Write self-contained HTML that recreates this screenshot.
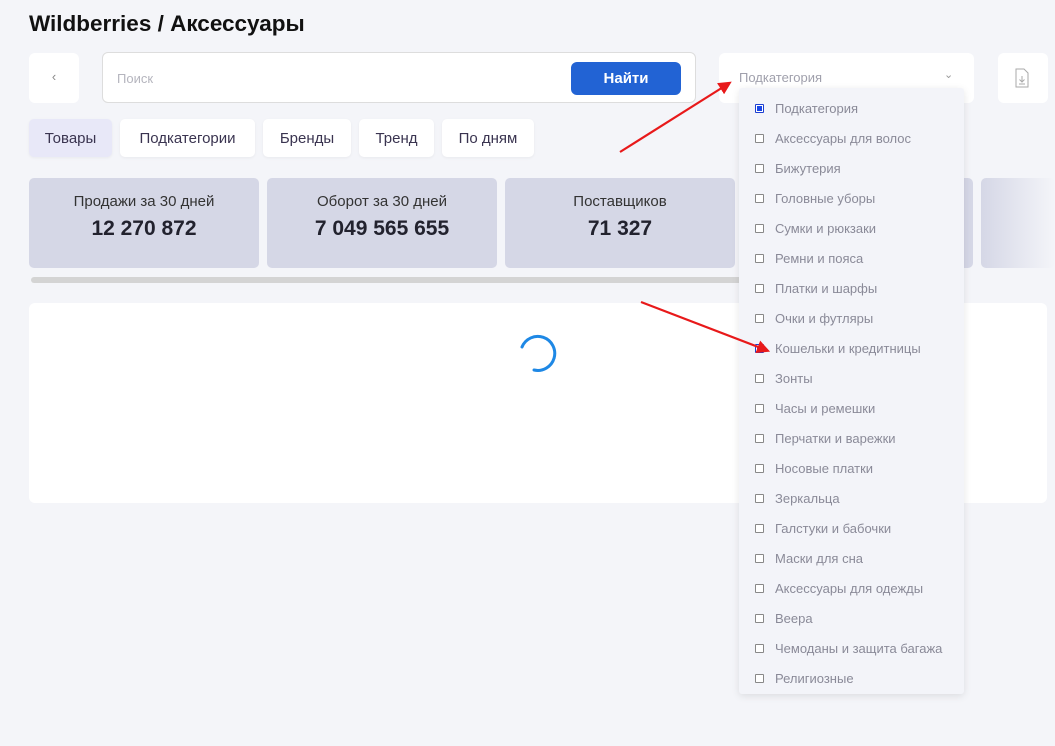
<!DOCTYPE html>
<html><head><meta charset="utf-8"><style>
*{box-sizing:border-box;margin:0;padding:0}
body{width:1055px;height:746px;background:#f4f5f9;font-family:"Liberation Sans",sans-serif;position:relative;overflow:hidden;color:#2a2a3a}
.a{position:absolute}
.w{background:#fff;border-radius:6px}
h1{position:absolute;left:29px;top:11px;font-size:22.5px;font-weight:bold;color:#111}
.tab{position:absolute;top:119px;height:38px;border-radius:5px;background:#fff;font-size:15px;line-height:39px;text-align:center;color:#3a3450;box-shadow:0 1px 3px rgba(0,0,0,.05)}
.card{position:absolute;top:178px;width:230px;height:90px;background:#d5d7e6;border-radius:5px;text-align:center}
.card .t{margin-top:15px;font-size:15px;color:#333}
.card .v{margin-top:7px;font-size:21px;font-weight:bold;color:#22222e}
.dd{position:absolute;left:739px;top:88px;width:225px;height:606px;background:#f3f4f9;box-shadow:0 2px 8px rgba(0,0,0,.1);border-radius:3px}
.it{position:absolute;left:36px;font-size:13px;color:#8a8a98;white-space:nowrap}
.cb{position:absolute;left:16px;width:9px;height:9px;border:1px solid #888;border-radius:1px;background:#fff}
.cb.on{border-color:#1d3fd0;background:#fff}
.cb.on::after{content:"";position:absolute;left:1px;top:1px;width:5px;height:5px;background:#1746e8}
</style></head><body>
<h1>Wildberries / Аксессуары</h1>
<div class="a w" style="left:29px;top:53px;width:50px;height:50px;text-align:center;line-height:48px;color:#888;font-size:13px">‹</div>
<div class="a w" style="left:102px;top:52px;width:594px;height:51px;border:1px solid #ddd"></div>
<div class="a" style="left:117px;top:71px;font-size:13px;color:#b5b5be">Поиск</div>
<div class="a" style="left:571px;top:62px;width:110px;height:33px;background:#2263d4;border-radius:6px;color:#fff;font-weight:bold;font-size:15px;text-align:center;line-height:33px">Найти</div>
<div class="a w" style="left:719px;top:53px;width:255px;height:50px"></div>
<div class="a" style="left:739px;top:70px;font-size:13px;color:#a0a0ac">Подкатегория</div>
<div class="a" style="left:944px;top:68px;font-size:11px;color:#999">⌄</div>
<div class="a w" style="left:998px;top:53px;width:50px;height:50px"></div>
<svg class="a" style="left:1014px;top:68px" width="16" height="20" viewBox="0 0 16 20"><path d="M2 1h8l4 4v14H2z" fill="none" stroke="#aaa"/><path d="M8 8v6M5.5 11.5L8 14l2.5-2.5M5 16h6" fill="none" stroke="#aaa"/></svg>
<div class="tab" style="left:29px;width:83px;background:#e8e8f8">Товары</div>
<div class="tab" style="left:120px;width:135px">Подкатегории</div>
<div class="tab" style="left:263px;width:88px">Бренды</div>
<div class="tab" style="left:359px;width:75px">Тренд</div>
<div class="tab" style="left:442px;width:92px">По дням</div>
<div class="card" style="left:29px"><div class="t">Продажи за 30 дней</div><div class="v">12 270 872</div></div>
<div class="card" style="left:267px"><div class="t">Оборот за 30 дней</div><div class="v">7 049 565 655</div></div>
<div class="card" style="left:505px"><div class="t">Поставщиков</div><div class="v">71 327</div></div>
<div class="card" style="left:743px"></div>
<div class="card" style="left:981px;width:74px;background:linear-gradient(90deg,#d5d7e6,#f4f5f9)"></div>
<div class="a" style="left:31px;top:277px;width:720px;height:6px;background:#d4d4d4;border-radius:3px"></div>
<div class="a w" style="left:29px;top:303px;width:1018px;height:200px"></div>
<svg class="a" style="left:518px;top:333px" width="40" height="40" viewBox="0 0 40 40"><path d="M4 14A17 17 0 1 1 16 37" fill="none" stroke="#1e88e5" stroke-width="3" stroke-linecap="round"/></svg>
<div class="dd">
<div class="cb on" style="top:16px"></div><div class="it" style="top:13px">Подкатегория</div>
<div class="cb" style="top:46px"></div><div class="it" style="top:43px">Аксессуары для волос</div>
<div class="cb" style="top:76px"></div><div class="it" style="top:73px">Бижутерия</div>
<div class="cb" style="top:106px"></div><div class="it" style="top:103px">Головные уборы</div>
<div class="cb" style="top:136px"></div><div class="it" style="top:133px">Сумки и рюкзаки</div>
<div class="cb" style="top:166px"></div><div class="it" style="top:163px">Ремни и пояса</div>
<div class="cb" style="top:196px"></div><div class="it" style="top:193px">Платки и шарфы</div>
<div class="cb" style="top:226px"></div><div class="it" style="top:223px">Очки и футляры</div>
<div class="cb on" style="top:256px"></div><div class="it" style="top:253px">Кошельки и кредитницы</div>
<div class="cb" style="top:286px"></div><div class="it" style="top:283px">Зонты</div>
<div class="cb" style="top:316px"></div><div class="it" style="top:313px">Часы и ремешки</div>
<div class="cb" style="top:346px"></div><div class="it" style="top:343px">Перчатки и варежки</div>
<div class="cb" style="top:376px"></div><div class="it" style="top:373px">Носовые платки</div>
<div class="cb" style="top:406px"></div><div class="it" style="top:403px">Зеркальца</div>
<div class="cb" style="top:436px"></div><div class="it" style="top:433px">Галстуки и бабочки</div>
<div class="cb" style="top:466px"></div><div class="it" style="top:463px">Маски для сна</div>
<div class="cb" style="top:496px"></div><div class="it" style="top:493px">Аксессуары для одежды</div>
<div class="cb" style="top:526px"></div><div class="it" style="top:523px">Веера</div>
<div class="cb" style="top:556px"></div><div class="it" style="top:553px">Чемоданы и защита багажа</div>
<div class="cb" style="top:586px"></div><div class="it" style="top:583px">Религиозные</div>
</div>
<svg class="a" style="left:0;top:0" width="1055" height="746"><defs><marker id="m" markerWidth="6" markerHeight="6" refX="4" refY="3" orient="auto"><path d="M0 0L6 3L0 6z" fill="#e8191a"/></marker></defs>
<line x1="620" y1="152" x2="728" y2="84" stroke="#e8191a" stroke-width="2.2" marker-end="url(#m)"/>
<line x1="641" y1="302" x2="766" y2="350" stroke="#e8191a" stroke-width="2.2" marker-end="url(#m)"/></svg>
</body></html>
